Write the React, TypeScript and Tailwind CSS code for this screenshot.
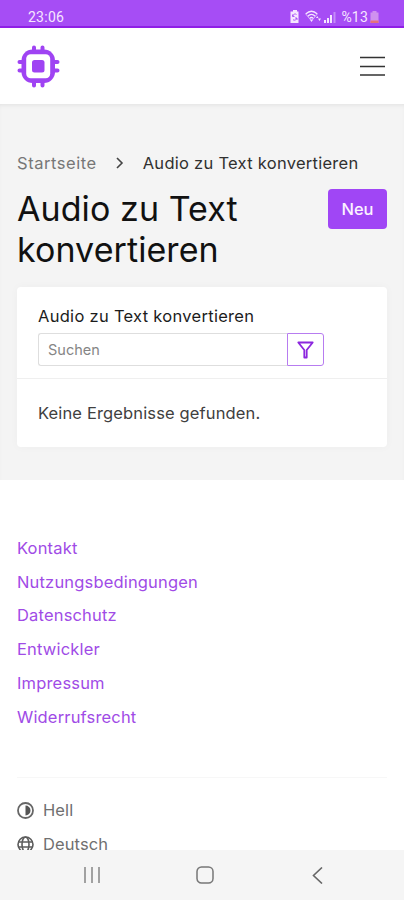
const footerLinks = [
  "Kontakt",
  "Nutzungsbedingungen",
  "Datenschutz",
  "Entwickler",
  "Impressum",
  "Widerrufsrecht",
];

const StatusBar = () => (
  <div className="flex h-[28px] shrink-0 items-center justify-between border-b-2 border-[#8f1fe6] bg-[#a64df5] pl-7 pr-[25px] pt-[7px] font-[Roboto,sans-serif] text-[14px] leading-none text-[#f6e6ff]">
    <span className="tracking-[0.25px]">23:06</span>
    <div className="flex items-center">
      <svg width="10" height="13" viewBox="0 0 10 13">
        <path d="M3 0h4v1.500h1.500v11.500h-8v-11.500h2.500z" fill="currentColor" />
        <path
          d="M6.500 4.500a2.200 2.200 0 0 0-3.600 1.600M3 9.700a2.200 2.200 0 0 0 3.600-1.600M2.500 4.500v2h2M7 10V8H5"
          fill="none"
          stroke="#a64df5"
          strokeWidth="0.9"
        />
      </svg>
      <svg className="ml-[5px]" width="17" height="13" viewBox="0 0 17 13">
        <g fill="none" stroke="currentColor" strokeWidth="1.3">
          <path d="M.7 4Q6.500-1.500 12.300 4" />
          <path d="M2.800 6.200q3.700-3.600 7.400 0" />
          <path d="M4.700 8.400q1.800-1.700 3.600 0" />
          <path d="M.7 4l5.800 7L12.300 4" strokeWidth="0.8" opacity=".7" />
        </g>
        <path d="M5 9.500h3L6.500 12zM11 8h2.500L12.200 6zM13 8.500h3L14.500 11z" fill="currentColor" />
      </svg>
      <svg className="ml-[2px]" width="12" height="12" viewBox="0 0 12 12" fill="currentColor">
        <path d="M0 9h2v3H0zM3 7h2v5H3zM6 4h2v8H6z" />
        <path d="M9.500 1h2v11h-2z" opacity=".4" />
      </svg>
      <span className="ml-[5px] tracking-[0.2px]">%13</span>
      <svg className="ml-[2px]" width="9" height="12" viewBox="0 0 9 12">
        <path d="M2.500 0h4v1.500H8.500V12H.5V1.500h2z" fill="#cf91ef" />
        <path d="M.5 9.500h8V12h-8z" fill="#e5707c" />
      </svg>
    </div>
  </div>
);

const Logo = () => (
  <svg width="43" height="43" viewBox="0 0 43 43" fill="#9f43f3">
    <path
      d="M17 2.500v5M25.500 2.500v5M17 35v5.500M25.500 35v5.500M2.500 17h5M2.500 25.500h5M35 17h5.500M35 25.500h5.500"
      stroke="#9f43f3"
      strokeWidth="4"
      strokeLinecap="round"
    />
    <rect x="4.500" y="4.500" width="33.500" height="33.500" rx="11" />
    <rect x="9.200" y="9.200" width="24" height="24" rx="4.500" fill="#fff" />
    <rect x="15" y="15" width="12.500" height="12.500" rx="2.500" />
  </svg>
);

const Header = () => (
  <header className="flex h-[76px] shrink-0 items-center justify-between bg-white pl-[17px] pr-[19px]">
    <Logo />
    <button aria-label="Menü">
      <svg width="25" height="20" viewBox="0 0 25 20" stroke="#333" strokeWidth="1.600">
        <path d="M0 1.500h25M0 10.500h25M0 19h25" />
      </svg>
    </button>
  </header>
);

const SearchCard = () => (
  <section className="mt-[17px] h-[160px] rounded bg-white shadow-[0_0_10px_rgba(0,0,0,0.03)]">
    <div className="h-[92px] border-b border-[#efefef] px-[21px] pt-[17px]">
      <h2 className="text-[16.500px] leading-[24px] tracking-[0.290px] text-[#1c1c1c]">
        Audio zu Text konvertieren
      </h2>
      <div className="mt-[5px] flex h-[33px] w-[286px]">
        <input
          className="min-w-0 flex-1 rounded-l-[3px] border border-r-0 border-[#dedede] bg-white px-[9px] text-[14.500px] outline-none placeholder:text-[#858585]"
          placeholder="Suchen"
        />
        <button
          aria-label="Filter"
          className="flex w-[37px] items-center justify-center rounded-r-[3px] border border-[#b77cf0]"
        >
          <svg width="17" height="18" viewBox="0 0 17 18" fill="none" stroke="#8c27de" strokeWidth="1.800">
            <path d="M1.300 1.500h14.400L9.700 9v7.500H7.300V9z" strokeLinejoin="round" />
          </svg>
        </button>
      </div>
    </div>
    <p className="px-[21px] pt-[22px] text-[16.500px] leading-[24px] tracking-[0.140px] text-[#404040]">
      Keine Ergebnisse gefunden.
    </p>
  </section>
);

const Footer = () => (
  <footer className="min-h-0 flex-1 overflow-hidden bg-white px-[17px] pt-[52px]">
    <ul className="text-[16.500px] leading-[33.700px] tracking-[0.170px] text-[#a04be6]">
      {footerLinks.map((link) => (
        <li key={link}>
          <a href="#">{link}</a>
        </li>
      ))}
    </ul>
    <div className="mt-[43px] border-t border-[#f7f7f7] pt-[16px] text-[16.500px] leading-[33.700px] tracking-[0.100px] text-[#707070]">
      <div className="flex items-center gap-[9px]">
        <svg className="mb-px" width="17" height="17" viewBox="0 0 17 17">
          <circle cx="8.500" cy="8.500" r="7.500" fill="none" stroke="#666" strokeWidth="1.800" />
          <path d="M8.500 3.500a5 5 0 0 1 0 10z" fill="#555" />
        </svg>
        <span>Hell</span>
      </div>
      <div className="flex items-center gap-[9px]">
        <svg className="mb-px" width="17" height="17" viewBox="0 0 17 17" fill="none" stroke="#5c5c5c" strokeWidth="1.600">
          <circle cx="8.500" cy="8.500" r="7.500" />
          <ellipse cx="8.500" cy="8.500" rx="3.500" ry="7.500" />
          <path d="M1.500 6h14M1.500 11h14" />
        </svg>
        <span>Deutsch</span>
      </div>
    </div>
  </footer>
);

const NavigationBar = () => (
  <nav className="flex h-[50px] shrink-0 items-center justify-between bg-[#f5f5f5] pl-[84px] pr-[81px]">
    <svg width="16" height="16" viewBox="0 0 16 16" stroke="#858585" strokeWidth="1.500">
      <path d="M1 0v16M8 0v16M15 0v16" />
    </svg>
    <svg className="-ml-[3px]" width="18" height="18" viewBox="0 0 18 18" fill="none" stroke="#777" strokeWidth="1.500">
      <rect x="1" y="1" width="16" height="16" rx="4.500" />
    </svg>
    <svg width="11" height="17" viewBox="0 0 11 17" fill="none" stroke="#666" strokeWidth="1.600">
      <path d="M10 .5L1.500 8.500L10 16.500" />
    </svg>
  </nav>
);

export default function App() {
  return (
    <div className="flex h-[900px] w-[404px] flex-col overflow-hidden bg-white font-[Inter,sans-serif]">
      <StatusBar />
      <Header />
      <main className="h-[376px] shrink-0 bg-[#f4f4f4] px-[17px] pt-[47px] shadow-[inset_0_3px_4px_-2px_rgba(0,0,0,0.08)]">
        <div className="flex h-6 items-center text-[16.500px] leading-6">
          <a href="#" className="tracking-[0.550px] text-[#777]">
            Startseite
          </a>
          <svg className="mx-[18px]" width="10" height="12" viewBox="0 0 10 12" fill="none" stroke="#444" strokeWidth="1.600">
            <path d="M2 1l5 5-5 5" />
          </svg>
          <span className="tracking-[0.270px] text-[#303030]">Audio zu Text konvertieren</span>
        </div>
        <div className="mt-[14px] flex items-start justify-between">
          <h1 className="w-[260px] text-[34px] leading-[40.500px] tracking-[0.080px] text-[#111]">
            Audio zu Text konvertieren
          </h1>
          <button className="h-[40px] w-[59px] rounded bg-[#a046f5] text-[16.500px] font-medium text-[#fbf2ff]">
            Neu
          </button>
        </div>
        <SearchCard />
      </main>
      <Footer />
      <NavigationBar />
    </div>
  );
}
